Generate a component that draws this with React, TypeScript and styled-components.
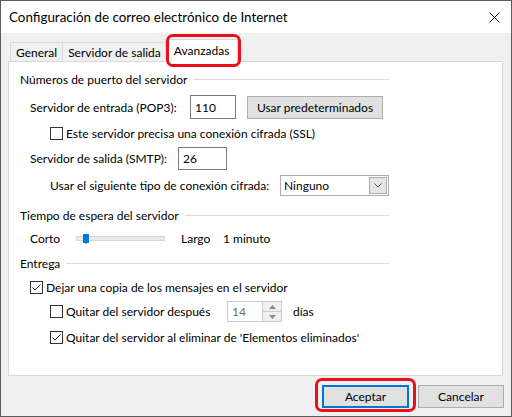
import React from 'react';
import styled, { createGlobalStyle } from 'styled-components';

const Global = createGlobalStyle`
  html, body { margin: 0; padding: 0; background: #fff; }
  body { font-family: "Segoe UI", Lato, "Noto Sans", sans-serif; font-size: 12px; color: #000; }
  * { box-sizing: border-box; }
`;

const Window = styled.div`
  width: 512px;
  height: 417px;
  border: 1px solid #5c5c5c;
  display: flex;
  flex-direction: column;
  background: #f0f0f0;
`;

const TitleBar = styled.div`
  height: 32px;
  flex: none;
  background: #fff;
  display: flex;
  align-items: center;
  justify-content: space-between;
  padding: 0 11px 0 8px;
`;

const TitleText = styled.span`
  font-size: 13.4px;
`;

const Body = styled.div`
  flex: 1;
  display: flex;
  flex-direction: column;
  padding: 7px 8px 0 7px;
`;

const TabStrip = styled.div`
  height: 22px;
  display: flex;
  align-items: flex-end;
  padding-left: 2px;
  margin-bottom: -1px;
  position: relative;
  z-index: 1;
`;

const Tab = styled.div<{ $active?: boolean }>`
  position: relative;
  height: ${(p) => (p.$active ? '23px' : '20px')};
  padding: ${(p) => (p.$active ? '0 8px' : '0 5px')};
  margin-left: ${(p) => (p.$active ? '-2px' : '-1px')};
  margin-right: ${(p) => (p.$active ? '-2px' : '0')};
  border: 1px solid #d9d9d9;
  border-bottom: ${(p) => (p.$active ? 'none' : '1px solid #d9d9d9')};
  background: ${(p) => (p.$active ? '#fff' : '#f0f0f0')};
  display: flex;
  align-items: ${(p) => (p.$active ? 'flex-start' : 'center')};
  padding-top: ${(p) => (p.$active ? '3px' : '0')};
  z-index: ${(p) => (p.$active ? 2 : 1)};
  &:first-child { margin-left: 0; }
`;

const Highlight = styled.span<{ $t: number; $r: number; $b: number; $l: number }>`
  position: absolute;
  top: ${(p) => p.$t}px;
  right: ${(p) => p.$r}px;
  bottom: ${(p) => p.$b}px;
  left: ${(p) => p.$l}px;
  border: 3px solid #e8101c;
  border-radius: 7px;
  pointer-events: none;
  z-index: 5;
`;

const Panel = styled.div`
  height: 315px;
  flex: none;
  background: #fff;
  border: 1px solid #d9d9d9;
  padding: 9px 0 0 11px;
  display: flex;
  flex-direction: column;
`;

const GroupHeader = styled.div<{ $mt?: number }>`
  width: 369px;
  height: 16px;
  margin-top: ${(p) => p.$mt ?? 0}px;
  display: flex;
  align-items: center;
  gap: 6px;
`;

const Rule = styled.div`
  flex: 1;
  height: 1px;
  background: #dcdcdc;
`;

const Row = styled.div<{ $mt: number; $h: number; $indent: number }>`
  display: flex;
  align-items: center;
  height: ${(p) => p.$h}px;
  margin-top: ${(p) => p.$mt}px;
  padding-left: ${(p) => p.$indent}px;
`;

const Label = styled.span<{ $w?: number }>`
  flex: none;
  width: ${(p) => (p.$w ? `${p.$w}px` : 'auto')};
  white-space: nowrap;
`;

const TextInput = styled.div<{ $w: number; $h: number }>`
  width: ${(p) => p.$w}px;
  height: ${(p) => p.$h}px;
  border: 1px solid #7a7a7a;
  background: #fff;
  display: flex;
  align-items: center;
  padding-left: 4px;
`;

const Button = styled.div<{ $w: number; $default?: boolean }>`
  position: relative;
  width: ${(p) => p.$w}px;
  height: 23px;
  background: #e1e1e1;
  border: ${(p) => (p.$default ? '2px solid #0078d7' : '1px solid #adadad')};
  display: flex;
  align-items: center;
  justify-content: center;
`;

const CheckBox = styled.span`
  flex: none;
  width: 13px;
  height: 13px;
  border: 1px solid #333;
  background: #fff;
  margin-right: 3px;
  display: flex;
  align-items: center;
  justify-content: center;
`;

const Select = styled.div`
  width: 109px;
  height: 21px;
  border: 1px solid #adadad;
  background: #fff;
  display: flex;
  align-items: center;
  justify-content: space-between;
  padding: 1px 1px 1px 3px;
`;

const SelectArrow = styled.div`
  width: 18px;
  height: 17px;
  background: #e5e5e5;
  border: 1px solid #acacac;
  display: flex;
  align-items: center;
  justify-content: center;
`;

const Track = styled.div`
  position: relative;
  width: 89px;
  height: 5px;
  background: #e7eaea;
  border: 1px solid #d6d6d6;
`;

const Thumb = styled.div`
  position: absolute;
  left: 6px;
  top: -3px;
  width: 6px;
  height: 9px;
  background: #0078d7;
  &::after {
    content: '';
    position: absolute;
    left: 1px;
    top: 8px;
    border-left: 2px solid transparent;
    border-right: 2px solid transparent;
    border-top: 2px solid #0078d7;
  }
`;

const Spin = styled.div`
  width: 55px;
  height: 21px;
  border: 1px solid #cccccc;
  background: #fff;
  display: flex;
  align-items: center;
  justify-content: space-between;
  color: #6d6d6d;
  padding-left: 4px;
  margin-right: 11px;
`;

const SpinButtons = styled.div`
  width: 19px;
  height: 19px;
  display: flex;
  flex-direction: column;
  border-left: 1px solid #cccccc;
`;

const SpinHalf = styled.div`
  flex: 1;
  background: #f0f0f0;
  display: flex;
  align-items: center;
  justify-content: center;
  & + & { border-top: 1px solid #cccccc; }
`;

const Footer = styled.div`
  display: flex;
  justify-content: flex-end;
  gap: 9px;
  padding-top: 9px;
  margin-right: -1px;
`;

const Check = ({ on }: { on?: boolean }) => (
  <CheckBox>
    {on && (
      <svg width="11" height="11" viewBox="0 0 11 11">
        <path d="M1.5 5.5 L4 8 L9.5 2.5" fill="none" stroke="#333" strokeWidth="1" />
      </svg>
    )}
  </CheckBox>
);

export default function App() {
  return (
    <>
      <Global />
      <Window>
        <TitleBar>
          <TitleText>Configuración de correo electrónico de Internet</TitleText>
          <svg width="11" height="11" viewBox="0 0 11 11">
            <path d="M0.5 0.5 L10.5 10.5 M10.5 0.5 L0.5 10.5" stroke="#000" strokeWidth="1" />
          </svg>
        </TitleBar>
        <Body>
          <TabStrip>
            <Tab>General</Tab>
            <Tab>Servidor de salida</Tab>
            <Tab $active>
              Avanzadas
              <Highlight $t={-6} $r={-4} $b={-5} $l={0} />
            </Tab>
          </TabStrip>
          <Panel>
            <GroupHeader>
              <span>Números de puerto del servidor</span>
              <Rule />
            </GroupHeader>
            <Row $mt={8} $h={24} $indent={10}>
              <Label $w={160}>Servidor de entrada (POP3):</Label>
              <TextInput $w={46} $h={24}>110</TextInput>
              <Button $w={136} style={{ marginLeft: 11 }}>Usar predeterminados</Button>
            </Row>
            <Row $mt={6} $h={17} $indent={30}>
              <Check />
              <Label>Este servidor precisa una conexión cifrada (SSL)</Label>
            </Row>
            <Row $mt={5} $h={23} $indent={10}>
              <Label $w={148}>Servidor de salida (SMTP):</Label>
              <TextInput $w={49} $h={23}>26</TextInput>
            </Row>
            <Row $mt={4} $h={23} $indent={30}>
              <Label $w={230}>Usar el siguiente tipo de conexión cifrada:</Label>
              <Select>
                <span>Ninguno</span>
                <SelectArrow>
                  <svg width="8" height="5" viewBox="0 0 8 5">
                    <path d="M0.5 0.5 L4 4 L7.5 0.5" fill="none" stroke="#555" strokeWidth="1" />
                  </svg>
                </SelectArrow>
              </Select>
            </Row>
            <GroupHeader $mt={10}>
              <span>Tiempo de espera del servidor</span>
              <Rule />
            </GroupHeader>
            <Row $mt={7} $h={16} $indent={10}>
              <Label $w={46}>Corto</Label>
              <Track>
                <Thumb />
              </Track>
              <Label $w={42} style={{ marginLeft: 16 }}>Largo</Label>
              <Label>1 minuto</Label>
            </Row>
            <GroupHeader $mt={9}>
              <span>Entrega</span>
              <Rule />
            </GroupHeader>
            <Row $mt={8} $h={16} $indent={10}>
              <Check on />
              <Label>Dejar una copia de los mensajes en el servidor</Label>
            </Row>
            <Row $mt={6} $h={21} $indent={30}>
              <Check />
              <Label $w={161}>Quitar del servidor después</Label>
              <Spin>
                <span>14</span>
                <SpinButtons>
                  <SpinHalf>
                    <svg width="7" height="4" viewBox="0 0 7 4"><path d="M0 4 L3.5 0 L7 4 Z" fill="#888" /></svg>
                  </SpinHalf>
                  <SpinHalf>
                    <svg width="7" height="4" viewBox="0 0 7 4"><path d="M0 0 L3.5 4 L7 0 Z" fill="#888" /></svg>
                  </SpinHalf>
                </SpinButtons>
              </Spin>
              <Label>días</Label>
            </Row>
            <Row $mt={7} $h={16} $indent={30}>
              <Check on />
              <Label>Quitar del servidor al eliminar de 'Elementos eliminados'</Label>
            </Row>
          </Panel>
          <Footer>
            <Button $w={87} $default>
              Aceptar
              <Highlight $t={-9} $r={-9} $b={-6} $l={-9} />
            </Button>
            <Button $w={86}>Cancelar</Button>
          </Footer>
        </Body>
      </Window>
    </>
  );
}
